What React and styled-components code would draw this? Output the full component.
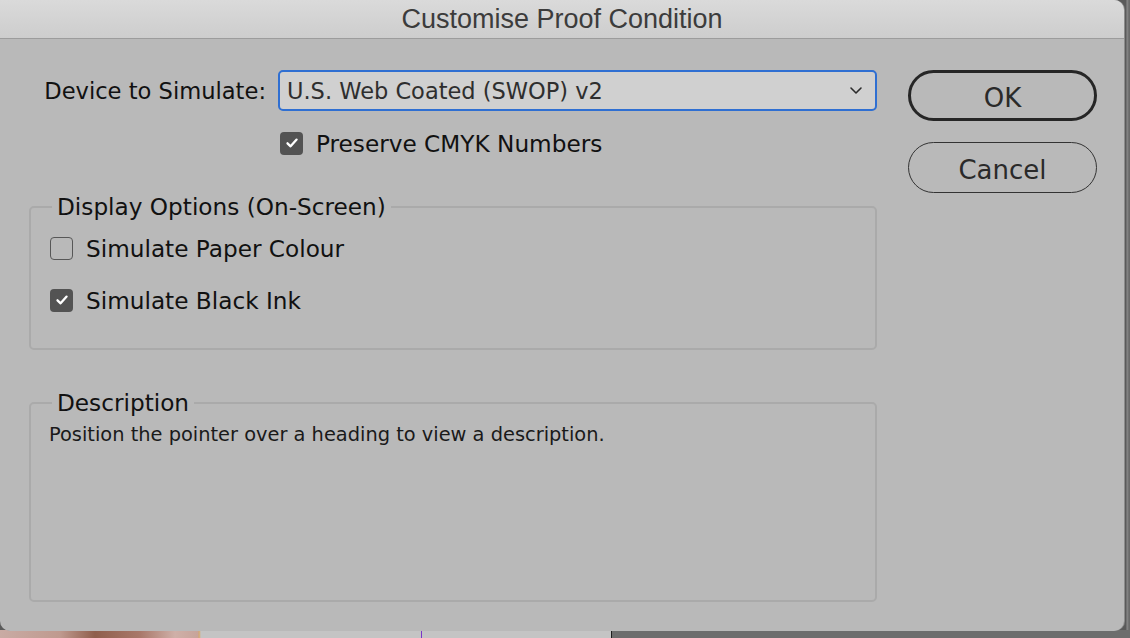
import React, { useState } from "react"
import styled, { createGlobalStyle } from "styled-components"

const GlobalStyle = createGlobalStyle`
	html, body {
		margin: 0;
		padding: 0;
		background: #5f5f5f;
	}
	body {
		font-family: "DejaVu Sans", "Noto Sans", sans-serif;
	}
`

const CheckIcon = () => (
	<svg width="16" height="16" viewBox="0 0 16 16">
		<path
			d="M3.5 8.3 L6.6 11.3 L12.6 4.6"
			fill="none"
			stroke="#fff"
			strokeWidth="2.3"
			strokeLinecap="round"
			strokeLinejoin="round"
		/>
	</svg>
)

const Chevron = () => (
	<svg width="14" height="9" viewBox="0 0 14 9">
		<path
			d="M2 2 L7 7 L12 2"
			fill="none"
			stroke="#2b2b2b"
			strokeWidth="1.6"
			strokeLinecap="round"
			strokeLinejoin="round"
		/>
	</svg>
)

const Checkbox = ({ label, checked, onToggle }) => (
	<CheckRow onClick={onToggle}>
		<Box checked={checked}>{checked && <CheckIcon />}</Box>
		<span>{label}</span>
	</CheckRow>
)

export default function App() {
	const [preserve, setPreserve] = useState(true)
	const [paper, setPaper] = useState(false)
	const [ink, setInk] = useState(true)

	return (
		<>
			<GlobalStyle />
			<Desktop>
				<Window>
					<TitleBar>Customise Proof Condition</TitleBar>
					<Body>
						<Main>
							<DeviceRow>
								<Label>Device to Simulate:</Label>
								<Select>
									<span>U.S. Web Coated (SWOP) v2</span>
									<Chevron />
								</Select>
								<span />
								<PreserveWrap>
									<Checkbox
										label="Preserve CMYK Numbers"
										checked={preserve}
										onToggle={() => setPreserve(!preserve)}
									/>
								</PreserveWrap>
							</DeviceRow>

							<Group top={36}>
								<Legend>Display Options (On-Screen)</Legend>
								<Options>
									<Checkbox
										label="Simulate Paper Colour"
										checked={paper}
										onToggle={() => setPaper(!paper)}
									/>
									<Checkbox
										label="Simulate Black Ink"
										checked={ink}
										onToggle={() => setInk(!ink)}
									/>
								</Options>
							</Group>

							<Group top={40}>
								<Legend>Description</Legend>
								<Description>
									Position the pointer over a heading to view a description.
								</Description>
							</Group>
						</Main>
						<Buttons>
							<Button primary>OK</Button>
							<Button>Cancel</Button>
						</Buttons>
					</Body>
				</Window>
			</Desktop>
		</>
	)
}

const Desktop = styled.div`
	width: 1130px;
	height: 638px;
	overflow: hidden;
	background:
		linear-gradient(
				to right,
				#c9aba4 0,
				#bf9a8f 60px,
				#8f5e4c 95px,
				#a9786a 140px,
				#cfb0a8 175px,
				#c7a49b 198px,
				#d6a86a 199px,
				#c4c4c4 201px,
				#c4c4c4 421px,
				#7a35c8 421px,
				#7a35c8 422px,
				#c4c4c4 422px,
				#c4c4c4 611px,
				#1e1e1e 611px,
				#1e1e1e 612px,
				#6d6d6d 612px
			)
			bottom / 100% 8px no-repeat,
		linear-gradient(to right, #5a5a5a 0, #5a5a5a 1126px, #8a8a8a 1127px, #6a6a6a 1129px);
`

const Window = styled.div`
	width: 1124px;
	height: 631px;
	display: flex;
	flex-direction: column;
	background: #b9b9b9;
	border-radius: 0 10px 10px 10px;
	overflow: hidden;
	box-shadow: 1px 0 0 #8c8c8c;
`

const TitleBar = styled.div`
	height: 38px;
	flex-shrink: 0;
	display: flex;
	align-items: center;
	justify-content: center;
	background: linear-gradient(#dadada, #cdcdcd);
	border-bottom: 1px solid #9c9c9c;
	font-family: "Liberation Sans", Arial, sans-serif;
	font-size: 27px;
	color: #3c3c3c;
`

const Body = styled.div`
	display: flex;
	gap: 31px;
	padding: 31px 27px 0 29px;
`

const Main = styled.div`
	width: 848px;
	display: flex;
	flex-direction: column;
`

const DeviceRow = styled.div`
	display: grid;
	grid-template-columns: 249px 1fr;
	row-gap: 17px;
	align-items: center;
`

const Label = styled.div`
	text-align: right;
	padding-right: 12px;
	font-size: 22.6px;
	color: #111;
`

const Select = styled.div`
	box-sizing: border-box;
	height: 41px;
	display: flex;
	align-items: center;
	justify-content: space-between;
	padding: 0 12px 0 7px;
	background: #d0d0d0;
	border: 2px solid #2f6fd2;
	border-radius: 5px;
	font-size: 22.5px;
	color: #2e2e2e;
`

const PreserveWrap = styled.div`
	padding-left: 2px;
`

const CheckRow = styled.label`
	display: flex;
	align-items: center;
	gap: 13px;
	height: 30px;
	font-size: 23.2px;
	color: #111;
	cursor: default;
	user-select: none;
`

const Box = styled.span`
	width: 23px;
	height: 23px;
	box-sizing: border-box;
	border-radius: 4px;
	display: flex;
	align-items: center;
	justify-content: center;
	background: ${(p) => (p.checked ? "#535353" : "transparent")};
	border: ${(p) => (p.checked ? "none" : "1.5px solid #575757")};
`

const Group = styled.fieldset`
	margin: ${(p) => p.top}px 0 0 0;
	padding: 0 20px 0 19px;
	border: 2px solid #aaaaaa;
	border-radius: 5px;
	min-width: 0;
`

const Legend = styled.legend`
	margin-left: 2px;
	padding: 0 5px;
	font-size: 23.2px;
	line-height: 26px;
	color: #111;
`

const Options = styled.div`
	display: flex;
	flex-direction: column;
	gap: 22px;
	padding: 13px 0 33px 0;
`

const Description = styled.div`
	margin-left: -1px;
	padding-top: 7px;
	height: 184px;
	box-sizing: border-box;
	font-size: 19.4px;
	line-height: 24px;
	color: #1a1a1a;
`

const Buttons = styled.div`
	width: 189px;
	display: flex;
	flex-direction: column;
	gap: 21px;
`

const Button = styled.button`
	height: 51px;
	box-sizing: border-box;
	border-radius: 26px;
	background: transparent;
	border: ${(p) => (p.primary ? "3px solid #262626" : "1.5px solid #333")};
	font-family: "DejaVu Sans", sans-serif;
	font-size: 26px;
	color: #2a2a2a;
	padding: 4px 0 0 0;
	cursor: default;
`
